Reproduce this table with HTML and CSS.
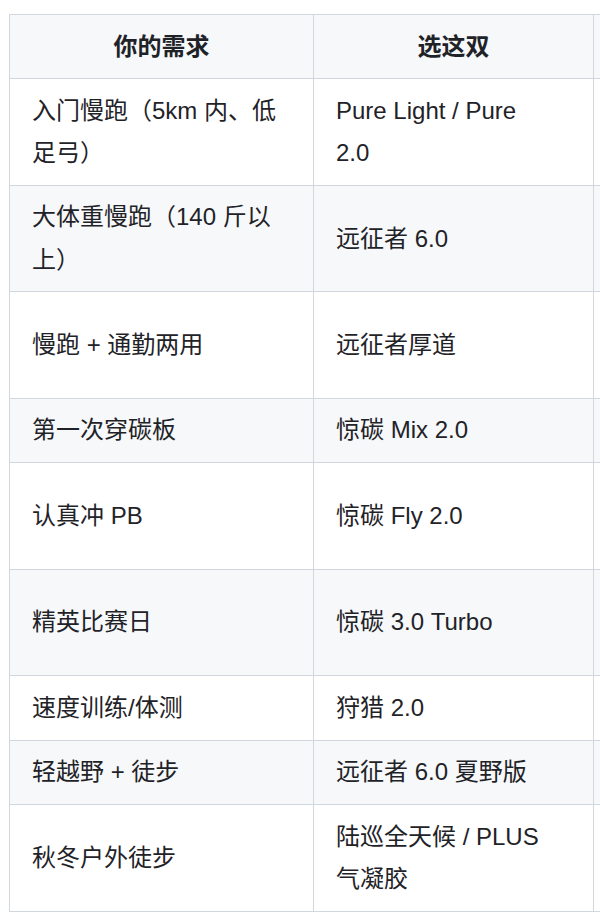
FILE: index.html
```html
<!DOCTYPE html>
<html lang="zh-CN">
<head>
<meta charset="utf-8">
<title>选鞋表</title>
<link rel="stylesheet" href="styles.css">
</head>
<body>
<div class="wrap">
  <table class="pick">
    <colgroup>
      <col class="c-need">
      <col class="c-shoe">
      <col class="c-more">
    </colgroup>
    <thead>
      <tr>
        <th>你的需求</th>
        <th>选这双</th>
        <th></th>
      </tr>
    </thead>
    <tbody>
      <tr>
        <td>入门慢跑（5km 内、低足弓）</td>
        <td>Pure Light / Pure<br>2.0</td>
        <td></td>
      </tr>
      <tr>
        <td>大体重慢跑（140 斤以上）</td>
        <td>远征者 6.0</td>
        <td></td>
      </tr>
      <tr class="tall">
        <td>慢跑 + 通勤两用</td>
        <td>远征者厚道</td>
        <td></td>
      </tr>
      <tr>
        <td>第一次穿碳板</td>
        <td>惊碳 Mix 2.0</td>
        <td></td>
      </tr>
      <tr class="tall">
        <td>认真冲 PB</td>
        <td>惊碳 Fly 2.0</td>
        <td></td>
      </tr>
      <tr class="tall">
        <td>精英比赛日</td>
        <td>惊碳 3.0 Turbo</td>
        <td></td>
      </tr>
      <tr>
        <td>速度训练/体测</td>
        <td>狩猎 2.0</td>
        <td></td>
      </tr>
      <tr>
        <td>轻越野 + 徒步</td>
        <td>远征者 6.0 夏野版</td>
        <td></td>
      </tr>
      <tr>
        <td>秋冬户外徒步</td>
        <td>陆巡全天候 / PLUS<br>气凝胶</td>
        <td></td>
      </tr>
    </tbody>
  </table>
</div>
</body>
</html>
```

FILE: styles.css
```css
html, body {
  margin: 0;
  padding: 0;
  background: #ffffff;
}

body {
  font-family: "Liberation Sans", "Noto Sans CJK SC", sans-serif;
  color: #1f2328;
  text-autospace: no-autospace;
}

.wrap {
  padding: 14px 0 0 9px;
  overflow: hidden;
}

.pick {
  border-collapse: collapse;
  table-layout: fixed;
  width: 904px;
  font-size: 24px;
  line-height: 42.2px;
}

.c-need { width: 304px; }
.c-shoe { width: 280px; }
.c-more { width: 320px; }

.pick th,
.pick td {
  border: 1px solid #d0d7de;
  vertical-align: middle;
  padding: 10.57px 22px;
}

.pick th {
  font-weight: 700;
  text-align: center;
  background: #f6f8fa;
}

.pick td {
  text-align: left;
  font-weight: 400;
}

.pick tbody tr:nth-child(2n) {
  background: #f6f8fa;
}

.pick tr.tall {
  height: 106.54px;
}
```
